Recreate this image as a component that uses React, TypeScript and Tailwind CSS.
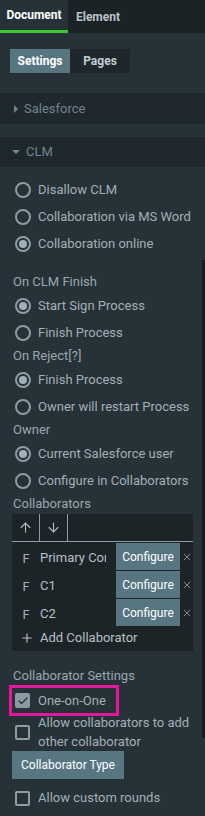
import { ArrowUp, ArrowDown, Plus, X, Check } from 'lucide-react';

function Radio({ label, checked }: { label: string; checked?: boolean }) {
  return (
    <div className="flex items-center h-[27px] pl-[15px] gap-[7px]">
      <span className="w-4 h-4 rounded-full border-2 border-[#8e9ba2] flex items-center justify-center shrink-0">
        {checked && <span className="w-2 h-2 rounded-full bg-[#9fb0b9]" />}
      </span>
      <span className="text-[13px] text-[#a3afb5] whitespace-nowrap">{label}</span>
    </div>
  );
}

function Label({ children }: { children: string }) {
  return <div className="text-[13px] text-[#9aa7ae] px-[13px] h-[20px] flex items-center">{children}</div>;
}

function CheckBox({ checked }: { checked?: boolean }) {
  return checked ? (
    <span className="w-[15px] h-[15px] rounded-[2px] bg-[#8a9aa3] flex items-center justify-center shrink-0">
      <Check size={12} strokeWidth={2.5} className="text-[#263238]" />
    </span>
  ) : (
    <span className="w-[15px] h-[15px] rounded-[2px] border-2 border-[#8e9ba2] shrink-0" />
  );
}

const collaborators = ['Primary Contact', 'C1', 'C2'];

export default function App() {
  return (
    <div className="relative w-[205px] h-[816px] bg-[#263238] overflow-hidden" style={{ fontFamily: 'Roboto, "Liberation Sans", sans-serif' }}>
      {/* Tabs */}
      <div className="flex h-[33px] bg-[#1c2327]">
        <div className="w-[68px] bg-[#263238] border-b-[3px] border-[#3ccb2e] flex items-center justify-center text-[12px] font-bold text-white">
          Document
        </div>
        <div className="w-[60px] flex items-center justify-center text-[12px] font-bold text-[#b9c2c7]">Element</div>
      </div>

      {/* Segmented */}
      <div className="pt-[16px] pl-[10px] flex">
        <div className="w-[60px] h-[24px] bg-[#587582] flex items-center justify-center text-[12px] font-bold text-white">Settings</div>
        <div className="w-[60px] h-[24px] bg-[#1e272c] flex items-center justify-center text-[12px] font-bold text-[#c5ccd0]">Pages</div>
      </div>

      {/* Salesforce */}
      <div className="mt-[20px] h-[31px] bg-[#1f282d] flex items-center pl-[14px] gap-[6px]">
        <span className="w-0 h-0 border-y-[4px] border-y-transparent border-l-[4px] border-l-[#6f8591]" />
        <span className="text-[13px] text-[#6f8591]">Salesforce</span>
      </div>

      {/* CLM */}
      <div className="mt-[13px] h-[30px] bg-[#1f282d] flex items-center pl-[12px] gap-[6px]">
        <span className="w-0 h-0 border-x-[4px] border-x-transparent border-t-[4px] border-t-[#6f8591]" />
        <span className="text-[13px] text-[#6f8591]">CLM</span>
      </div>

      <div className="pt-[9px]">
        <Radio label="Disallow CLM" />
        <Radio label="Collaboration via MS Word" />
        <Radio label="Collaboration online" checked />
      </div>

      <div className="mt-[15px]">
        <Label>On CLM Finish</Label>
        <Radio label="Start Sign Process" checked />
        <Radio label="Finish Process" />
        <Label>On Reject[?]</Label>
        <Radio label="Finish Process" checked />
        <Radio label="Owner will restart Process" />
        <Label>Owner</Label>
        <Radio label="Current Salesforce user" checked />
        <Radio label="Configure in Collaborators" />
        <Label>Collaborators</Label>
      </div>

      {/* Collaborators table */}
      <div className="mx-[12px] bg-[#1c2428] pb-[2px]">
        <div className="flex h-[28px] border-b border-[#8e9ba2]">
          <div className="w-[28px] flex items-center justify-center border-r border-[#8e9ba2]">
            <ArrowUp size={15} strokeWidth={1.75} className="text-[#b6c0c5]" />
          </div>
          <div className="w-[28px] flex items-center justify-center border-r border-[#8e9ba2]">
            <ArrowDown size={15} strokeWidth={1.75} className="text-[#b6c0c5]" />
          </div>
        </div>
        <div className="pt-[1px]">
          {collaborators.map((c) => (
            <div key={c} className="flex h-[28px] items-stretch">
              <span className="w-[28px] flex items-end justify-center pb-[3px] text-[13px] text-[#a3afb5]">F</span>
              <span className="w-[66px] mr-[10px] overflow-hidden whitespace-nowrap text-[13px] text-[#b6c0c5] pt-[5px]">{c}</span>
              <span className="w-[64px] mb-[1px] bg-[#587582] flex items-center justify-center text-[12px] text-white">Configure</span>
              <span className="flex-1 flex items-center justify-center">
                <X size={12} strokeWidth={1.5} className="text-[#a3afb5]" />
              </span>
            </div>
          ))}
        </div>
        <div className="flex items-center h-[22px] pl-[8px] gap-[6px]">
          <Plus size={14} strokeWidth={2} className="text-[#b6c0c5]" />
          <span className="text-[13px] text-[#b6c0c5]">Add Collaborator</span>
        </div>
      </div>

      {/* Collaborator Settings */}
      <div className="mt-[15px]">
        <Label>Collaborator Settings</Label>
        <div className="ml-[9px] mt-[-1px] w-[110px] h-[31px] border-[3px] border-[#e4189f] flex items-center pl-[3px] gap-[8px]">
          <CheckBox checked />
          <span className="text-[13px] text-[#a3afb5]">One-on-One</span>
        </div>
        <div className="flex items-center pl-[15px] gap-[8px] mt-[-3px]">
          <CheckBox />
          <span className="text-[13px] leading-[19px] text-[#a3afb5]">Allow collaborators to add other collaborator</span>
        </div>
        <div className="ml-[12px] w-[112px] h-[28px] bg-[#587582] flex items-center justify-center text-[12px] text-white">
          Collaborator Type
        </div>
        <div className="flex items-center h-[38px] pl-[15px] gap-[8px]">
          <CheckBox />
          <span className="text-[13px] text-[#a3afb5]">Allow custom rounds</span>
        </div>
      </div>

      {/* scrollbar */}
      <div className="absolute right-0 top-[260px] w-[3px] h-[478px] bg-[#161c1f]" />
    </div>
  );
}
